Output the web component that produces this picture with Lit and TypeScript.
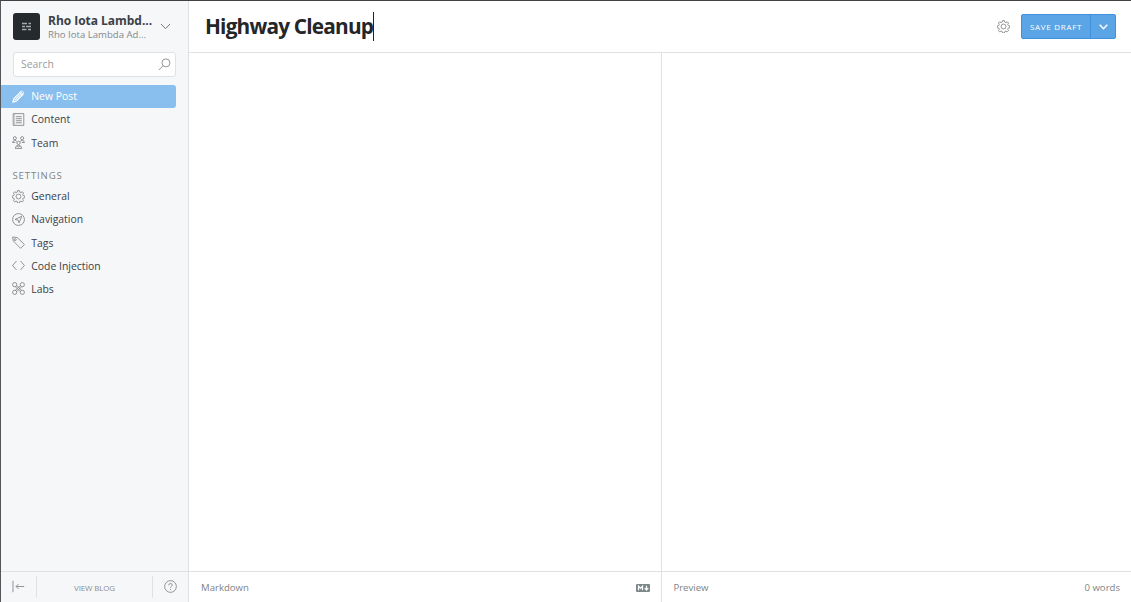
import { LitElement, html, css, svg } from "lit";
import { customElement } from "lit/decorators.js";
import { classMap } from "lit/directives/class-map.js";

const gearPath =
  "M6.9 .7h2.2l.5 1.9 1.4.6 1.7-1 1.5 1.5-1 1.7.6 1.4 1.9.5v2.2l-1.9.5-.6 1.4 1 1.7-1.5 1.5-1.7-1-1.4.6-.5 1.9H6.9l-.5-1.9-1.4-.6-1.7 1-1.5-1.5 1-1.7-.6-1.4-1.9-.5V7.3l1.9-.5.6-1.4-1-1.7 1.5-1.5 1.7 1 1.4-.6z";

const icons = {
  pen: svg`<path fill="currentColor" fill-opacity=".45" d="M1 15l1.3-4.6L10.500 2.200l3.300 3.300L5.600 13.700z"/><path d="M1 15l1.300-4.600L11 1.700q1.200-1 2.500.3t.4 2.500L5.600 13.700zM9.600 3.200l3.300 3.300M4 12l6.300-6.300"/>`,
  content: svg`<path d="M1.500 .8h13v14.400h-13z"/><path d="M3.300 1v14" opacity=".5"/><path d="M5 4.500h7M5 7h7M5 9.500h7M5 12h7"/>`,
  team: svg`<circle cx="3.500" cy="2.700" r="1.900"/><circle cx="12.500" cy="2.700" r="1.900"/><circle cx="8" cy="8.500" r="2"/><path d="M.6 8.300Q.8 5.500 3.500 5.500q1.600 0 2.400 1.300M15.400 8.300q-.2-2.800-2.900-2.800-1.600 0-2.400 1.300M1 8h3M12 8h3M4 15.300q.2-3.700 4-3.700t4 3.700zM6 12l2 1.500 2-1.500"/>`,
  gear: svg`<path d=${gearPath}/><circle cx="8" cy="8" r="3"/>`,
  compass: svg`<circle cx="8" cy="8" r="7.300"/><path d="M12 4L8.700 12.200 7.500 8.700 3.700 8z"/>`,
  tag: svg`<path d="M.8 1.300l5.500.5 9 8.700-4.700 4.700-8.900-9z"/><circle cx="4" cy="4.500" r="1.200"/>`,
  code: svg`<path d="M5.500 2.500L.7 8l4.800 5.500M10.500 2.500L15.300 8l-4.800 5.500"/>`,
  labs: svg`<path d="M5.800 4.200l6 6M4.200 5.800l6 6M10.200 4.200l-6 6M11.800 5.800l-6 6"/><circle cx="3.300" cy="3.300" r="2.600"/><circle cx="12.700" cy="3.300" r="2.600"/><circle cx="3.300" cy="12.700" r="2.600"/><circle cx="12.700" cy="12.700" r="2.600"/>`,
  search: svg`<circle cx="9.800" cy="6" r="4.900"/><path d="M6.300 9.500L1 14.800"/>`,
  collapse: svg`<path d="M1.200 1v14M15 8H5M8 5L5 8l3 3"/>`,
  help: svg`<circle cx="8" cy="8" r="7.200"/><path d="M5.800 6.500q0-2.200 2.200-2.200t2.200 1.900q0 1-1.200 1.700-1 .6-1 1.700M8 11v1.300"/>`,
};

type IconName = keyof typeof icons;

const icon = (name: IconName) =>
  html`<svg class="icon" viewBox="0 0 16 16" aria-hidden="true">${icons[name]}</svg>`;

interface NavItem {
  label: string;
  icon: IconName;
  active?: boolean;
}

const mainNav: NavItem[] = [
  { label: "New Post", icon: "pen", active: true },
  { label: "Content", icon: "content" },
  { label: "Team", icon: "team" },
];

const settingsNav: NavItem[] = [
  { label: "General", icon: "gear" },
  { label: "Navigation", icon: "compass" },
  { label: "Tags", icon: "tag" },
  { label: "Code Injection", icon: "code" },
  { label: "Labs", icon: "labs" },
];

@customElement("app-root")
export class AppRoot extends LitElement {
  static styles = css`
    :host {
      display: flex;
      box-sizing: border-box;
      width: 100%;
      height: 100vh;
      overflow: hidden;
      border-top: 1px solid #404045;
      border-left: 1px solid #55565b;
      background: #fff;
      color: #3b4045;
      font-family: "Open Sans", sans-serif;
      font-size: 10.4px;
    }
    * {
      box-sizing: border-box;
    }
    .icon {
      display: block;
      flex: none;
      width: 13px;
      height: 13px;
      fill: none;
      stroke: currentColor;
      stroke-width: 1.05;
      color: #808284;
    }
    .sidebar {
      display: flex;
      flex-direction: column;
      flex: none;
      width: 188px;
      background: #f5f7f9;
      border-right: 1px solid #dfe1e3;
    }
    .blog {
      display: flex;
      align-items: center;
      height: 51px;
      padding-left: 12px;
    }
    .logo {
      width: 27px;
      height: 27px;
      border-radius: 3px;
      background: #242a2e;
      flex: none;
    }
    .names {
      width: 105px;
      margin-left: 8px;
      padding-top: 1px;
      white-space: nowrap;
    }
    .blog-name {
      font-size: 12px;
      font-weight: 700;
      line-height: 14px;
      letter-spacing: -0.03px;
    }
    .user-name {
      font-size: 9.6px;
      line-height: 13px;
      color: #85898c;
    }
    .chevron {
      width: 11px;
      height: 7px;
      margin-left: 7px;
      fill: none;
      stroke: #77797b;
    }
    .search {
      display: flex;
      align-items: center;
      justify-content: space-between;
      height: 25px;
      margin: 0 12px 8px;
      padding: 0 4px 0 7px;
      border: 1px solid #dfe1e3;
      border-radius: 3px;
      background: #fff;
      color: #9a9c9e;
    }
    .search span {
      padding-bottom: 1px;
    }
    .nav {
      display: flex;
      flex-direction: column;
      padding-right: 12px;
    }
    .item {
      display: flex;
      align-items: center;
      gap: 6px;
      height: 23.2px;
      padding: 0 0 0.8px 11.3px;
    }
    .item.active {
      background: #89bfee;
      color: #fff;
      border-radius: 0 3px 3px 0;
    }
    .item.active .icon {
      color: #fff;
    }
    .heading {
      margin: 13px 0 1.4px 11.5px;
      height: 16px;
      line-height: 16px;
      font-size: 9.6px;
      letter-spacing: 0.85px;
      color: #808486;
    }
    .side-foot {
      display: flex;
      align-items: center;
      height: 31px;
      margin-top: auto;
      border-top: 1px solid #dfe1e3;
    }
    .foot-cell {
      display: flex;
      align-items: center;
      justify-content: center;
      height: 22px;
      width: 35px;
      padding-bottom: 1px;
    }
    .foot-cell.view {
      flex: 1;
      border: solid #dfe1e3;
      border-width: 0 1px;
      color: #8b9092;
      font-size: 8px;
      letter-spacing: -0.15px;
      padding-top: 1px;
    }
    .main {
      display: flex;
      flex-direction: column;
      flex: 1;
      min-width: 0;
    }
    .header {
      display: flex;
      align-items: center;
      height: 52px;
      padding: 0 15px 0 16px;
      border-bottom: 1px solid #dfe1e3;
    }
    .title {
      margin: 0;
      font-size: 20.8px;
      font-weight: 700;
      letter-spacing: -0.8px;
      line-height: 29px;
      color: #242628;
    }
    .caret {
      width: 1px;
      height: 29px;
      background: #222;
    }
    .tools {
      display: flex;
      align-items: center;
      margin-left: auto;
      gap: 11px;
    }
    .save {
      display: flex;
      height: 25px;
      border: 1px solid #3f91de;
      border-radius: 2px;
      background: #5ba4e5;
      color: #fff;
    }
    .save-label {
      display: flex;
      align-items: center;
      width: 69px;
      padding-left: 8px;
      border-right: 1px solid #3f91de;
      font-size: 8px;
      letter-spacing: 0.7px;
      white-space: nowrap;
    }
    .save-more {
      display: flex;
      align-items: center;
      justify-content: center;
      width: 24px;
    }
    .save-more svg {
      width: 9px;
      height: 6px;
      fill: none;
      stroke: #fff;
      stroke-width: 1.5;
    }
    .panes {
      display: flex;
      flex: 1;
    }
    .pane {
      display: flex;
      flex-direction: column;
      flex: 1;
    }
    .pane.source {
      flex: none;
      width: 473px;
      border-right: 1px solid #dfe1e3;
    }
    .pane-foot {
      display: flex;
      align-items: center;
      justify-content: space-between;
      height: 31px;
      margin-top: auto;
      padding: 1px 11px 0 11.4px;
      border-top: 1px solid #dfe1e3;
      color: #808486;
      font-size: 9.6px;
    }
    .source .pane-foot {
      padding-left: 12px;
      padding-right: 12px;
    }
    .md {
      width: 14px;
      height: 8px;
      margin-right: -0.5px;
    }
  `;

  private renderItem(item: NavItem) {
    return html`<div class=${classMap({ item: true, active: !!item.active })}>
      ${icon(item.icon)}<span>${item.label}</span>
    </div>`;
  }

  render() {
    return html`
      <aside class="sidebar">
        <div class="blog">
          <svg class="logo" viewBox="0 0 27 27">
            <path
              d="M9 10.500h5M15.500 10.500h2.500M9 13.500h3M13 13.500h5M9 16.500h4.500M15 16.500h3"
              stroke="#a4acae"
              stroke-width="1.500"
            />
          </svg>
          <div class="names">
            <div class="blog-name">Rho Iota Lambd...</div>
            <div class="user-name">Rho Iota Lambda Ad...</div>
          </div>
          <svg class="chevron" viewBox="0 0 11 7"><path d="M1 1l4.500 4.700L10 1" /></svg>
        </div>
        <div class="search"><span>Search</span>${icon("search")}</div>
        <nav class="nav">${mainNav.map((i) => this.renderItem(i))}</nav>
        <div class="heading">SETTINGS</div>
        <nav class="nav">${settingsNav.map((i) => this.renderItem(i))}</nav>
        <div class="side-foot">
          <div class="foot-cell">${icon("collapse")}</div>
          <div class="foot-cell view">VIEW BLOG</div>
          <div class="foot-cell">${icon("help")}</div>
        </div>
      </aside>
      <main class="main">
        <header class="header">
          <h1 class="title">Highway Cleanup</h1>
          <span class="caret"></span>
          <div class="tools">
            ${icon("gear")}
            <div class="save">
              <span class="save-label">SAVE DRAFT</span>
              <span class="save-more"
                ><svg viewBox="0 0 9 6"><path d="M.7 .8l3.800 3.900L8.300 .8" /></svg
              ></span>
            </div>
          </div>
        </header>
        <div class="panes">
          <section class="pane source">
            <div class="pane-foot">
              <span>Markdown</span>
              <svg class="md" viewBox="0 0 14 8">
                <rect width="14" height="8" rx="1" fill="#7d878a" />
                <path
                  d="M2.500 6.300V2l2 2.300 2-2.300v4.300M10.500 1.700v4M8.700 4.200l1.800 2 1.800-2"
                  fill="none"
                  stroke="#fff"
                  stroke-width="1.200"
                />
              </svg>
            </div>
          </section>
          <section class="pane">
            <div class="pane-foot"><span>Preview</span><span>0 words</span></div>
          </section>
        </div>
      </main>
    `;
  }
}
